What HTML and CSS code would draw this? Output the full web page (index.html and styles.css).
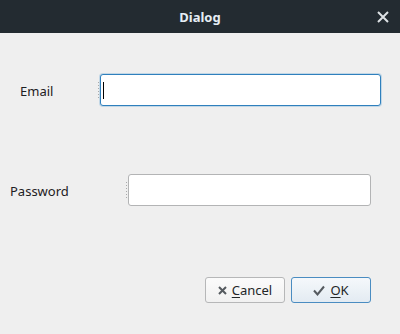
FILE: index.html
```html
<!DOCTYPE html>
<html lang="en">
<head>
    <meta charset="UTF-8">
    <meta name="viewport" content="width=device-width, initial-scale=1.0">
    <title>Dialog</title>
    <link rel="stylesheet" href="styles.css">
</head>
<body>
    <div class="titlebar">
        <span class="title">Dialog</span>
        <svg class="close" width="12" height="12" viewBox="0 0 12 12">
            <path d="M1 1 L11 11 M11 1 L1 11" stroke="#dde1e4" stroke-width="2" fill="none"/>
        </svg>
    </div>

    <div class="content">
        <div class="row row-email">
            <label class="label label-email">Email</label>
            <span class="grip"></span>
            <div class="field field-focus field-email"><span class="caret"></span></div>
        </div>

        <div class="row row-password">
            <label class="label label-password">Password</label>
            <span class="grip"></span>
            <div class="field field-password"></div>
        </div>

        <div class="buttons">
            <button class="btn">
                <svg width="9" height="9" viewBox="0 0 9 9">
                    <path d="M1 1 L8 8 M8 1 L1 8" stroke="#555a5f" stroke-width="2" fill="none"/>
                </svg>
                <span><u>C</u>ancel</span>
            </button>
            <button class="btn btn-default">
                <svg width="12" height="11" viewBox="0 0 12 11">
                    <path d="M1 5.5 L4.5 9.5 L11 1.5" stroke="#555a5f" stroke-width="2" fill="none"/>
                </svg>
                <span><u>O</u>K</span>
            </button>
        </div>
    </div>
</body>
</html>
```

FILE: styles.css
```css
body {
    margin: 0;
    width: 400px;
    height: 334px;
    background-color: #efefef;
    font-family: "Noto Sans", sans-serif;
    font-size: 13px;
    color: #232627;
    overflow: hidden;
}
.titlebar {
    height: 33px;
    background-color: #232b31;
    display: flex;
    align-items: center;
    justify-content: center;
    position: relative;
}
.title {
    color: #e6eef5;
    font-weight: bold;
    font-size: 13px;
}
.close {
    position: absolute;
    right: 11px;
    top: 11px;
}
.content {
    display: flex;
    flex-direction: column;
}
.row {
    display: flex;
    align-items: center;
    height: 32px;
}
.row-email {
    margin-top: 41px;
}
.row-password {
    margin-top: 68px;
}
.label {
    color: #1d2023;
    padding-top: 2px;
}
.label-email {
    margin-left: 20px;
    width: 78px;
}
.label-password {
    margin-left: 10px;
    width: 116px;
}
.grip {
    width: 1px;
    height: 17px;
    margin-right: 1px;
    background: repeating-linear-gradient(to bottom, #a8a9aa 0 1px, transparent 1px 3px);
}
.field {
    height: 32px;
    box-sizing: border-box;
    background-color: #fff;
    border: 1px solid #b3b4b5;
    border-radius: 3px;
    display: flex;
    align-items: center;
}
.field-focus {
    border-color: #2f80bd;
    box-shadow: 0 0 0 1px rgba(61, 142, 205, 0.25);
}
.field-email {
    width: 281px;
}
.field-password {
    width: 243px;
}
.caret {
    width: 1px;
    height: 17px;
    margin-left: 2px;
    background-color: #000;
}
.buttons {
    display: flex;
    justify-content: flex-end;
    gap: 6px;
    margin-top: 71px;
    margin-right: 29px;
}
.btn {
    width: 80px;
    height: 26px;
    box-sizing: border-box;
    border: 1px solid #b6b7b8;
    border-radius: 3px;
    background: linear-gradient(to bottom, #fbfbfb, #f1f1f1);
    font-family: "Noto Sans", sans-serif;
    font-size: 13px;
    color: #232627;
    display: flex;
    align-items: center;
    justify-content: center;
    gap: 5px;
    padding: 0;
}
.btn-default {
    border-color: #4a8cc1;
    background: linear-gradient(to bottom, #f5f8fb, #e3ebf2);
}
.btn u {
    text-decoration-thickness: 1px;
    text-underline-offset: 2px;
}
```
